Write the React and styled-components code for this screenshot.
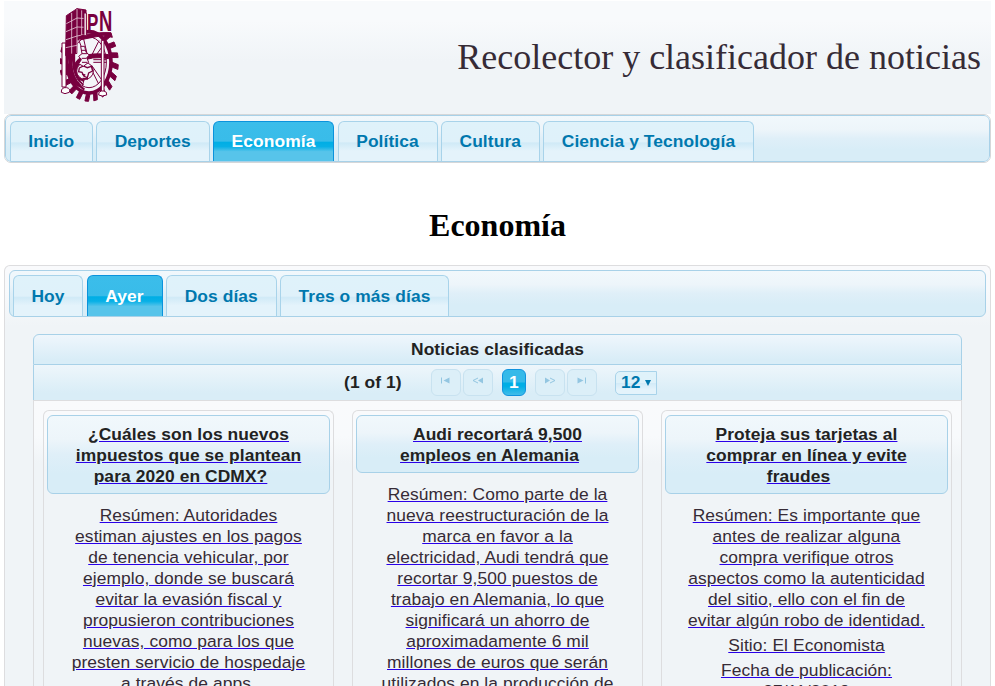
import React from "react";
import styled, { createGlobalStyle, css } from "styled-components";

const Global = createGlobalStyle`
  * { box-sizing: border-box; }
  html, body { margin: 0; height: 686px; overflow: hidden; background: #fff; }
  body {
    font-family: "Liberation Sans", Arial, sans-serif;
    font-size: 17.4px;
    letter-spacing: 0.09px;
    color: #362b36;
  }
`;

const frost = "linear-gradient(#f1f8fc 0, #edf5fa 30%, #dfeff8 50%, #d8edf7 75%, #d8edf7 100%)";

const Page = styled.div`
  width: 987px;
  height: 686px;
  margin-left: 4px;
  padding-top: 1px;
  overflow: hidden;
`;

const Header = styled.header`
  height: 113px;
  padding: 0 10px 0 56px;
  display: flex;
  justify-content: space-between;
  align-items: flex-start;
  background: linear-gradient(#f8fafc 0, #f8fafc 20px, #f0f4f7 60px);
`;

const SiteTitle = styled.div`
  margin-top: 36px;
  font-family: "Liberation Serif", "Times New Roman", serif;
  font-size: 36px;
  letter-spacing: 0;
  line-height: 41px;
  white-space: nowrap;
`;

const Crest = styled.svg`
  margin-top: 6px;
  width: 60px;
  height: 97px;
`;

const TabBar = styled.nav`
  display: flex;
  align-items: flex-end;
  gap: 3.5px;
  height: 47px;
  padding: 0 ${(p) => p.$inset}px;
  border: 1px solid #a8d1e8;
  border-radius: 6px;
  background: ${frost};
`;

const NavFrame = styled.div`
  height: 49px;
  border: 1px solid #d5d7d9;
  border-radius: 7px;
  overflow: hidden;
`;

const Tab = styled.a`
  width: ${(p) => p.$width}px;
  height: ${(p) => p.$height}px;
  padding-top: ${(p) => p.$height - 31}px;
  border: 1px solid #a8d3ea;
  border-bottom: 0;
  border-radius: 6px 6px 0 0;
  background: linear-gradient(#dff2fa 0, #dff1fa 50%, #d0eaf7 54%, #e4f3fb 74%, #e4f3fb 100%);
  color: #0078ae;
  font-weight: bold;
  line-height: 20px;
  text-align: center;
  white-space: nowrap;
  ${(p) =>
    p.$active &&
    css`
      border-color: #0b93dc;
      background: linear-gradient(#3bbdea 0, #39bce9 49%, #00aee5 52%, #08b0e6 63%, #57c4ea 76%, #57c4ea 100%);
      color: #fff;
    `}
`;

const PageTitle = styled.h1`
  margin: 45px 0 22px;
  font: bold 32px/35px "Liberation Serif", "Times New Roman", serif;
  letter-spacing: 0;
  color: #000;
  text-align: center;
`;

const Panel = styled.section`
  height: 440px;
  padding: 4px 4px 0;
  border: 1px solid #dddddf;
  border-bottom: 0;
  border-radius: 6px 6px 0 0;
  background: linear-gradient(#f9fafc 0, #f8fafc 25px, #f0f4f7 60px);
`;

const DataGrid = styled.div`
  margin: 17px 24px 0;
`;

const GridTitle = styled.div`
  height: 31px;
  border: 1px solid #a8d1e8;
  border-radius: 6px 6px 0 0;
  background: linear-gradient(#eff6fc, #d9edf7 85%);
  color: #222;
  font-weight: bold;
  line-height: 29px;
  text-align: center;
`;

const Pager = styled.div`
  display: flex;
  height: 35px;
  align-items: center;
  padding-left: 310px;
  border: solid #a8d1e8;
  border-width: 0 1px;
  background: linear-gradient(#eef6fb, #d9edf7 80%);
  color: #222;
  font-weight: bold;
`;

const PageCount = styled.span`
  width: 87px;
`;

const PageButton = styled.span`
  display: flex;
  width: ${(p) => (p.$active ? 24 : 30)}px;
  height: 27px;
  margin-right: ${(p) => p.$gap}px;
  justify-content: center;
  align-items: center;
  border: 1px solid ${(p) => (p.$active ? "#1093de" : "#c8e2f0")};
  border-radius: 6px;
  background: ${(p) => (p.$active ? "linear-gradient(#36bae9 0 48%, #00aee5 52% 65%, #42bdea)" : "#dceff8")};
  color: #fff;
  svg { display: block; margin-bottom: 4px; }
`;

const RowsSelect = styled.span`
  display: flex;
  align-items: center;
  gap: 4px;
  width: 42px;
  height: 24px;
  padding-left: 5px;
  border: 1px solid #a8d3ea;
  border-radius: 5px 0 0 5px;
  background: linear-gradient(#dff2fa 0 48%, #d3ebf8 52%, #e4f3fb 80%);
  color: #0078ae;
`;

const Cards = styled.div`
  display: grid;
  grid-template-columns: repeat(3, 291px);
  column-gap: 18px;
  height: 310px;
  padding: 9px 9px 0;
  border: 1px solid #dddddf;
  border-bottom: 0;
  background: linear-gradient(#f9fafc 0, #f8fafc 35px, #f0f4f7 62px);
`;

const Card = styled.article`
  padding: 4px 3px 0;
  border: 1px solid #dddddf;
  border-bottom: 0;
  border-radius: 6px 6px 0 0;
  background: linear-gradient(#f9fafc 0, #f8fafc 30px, #f0f4f7 58px);
  text-align: center;
  line-height: 21px;
`;

const Line = styled.div`
  white-space: nowrap;
  text-decoration: underline #2a00e8;
`;

const CardTitle = styled.h2`
  margin: 0 0 11px;
  padding: 8px 0 6px;
  border: 1px solid #a8d1e8;
  border-radius: 6px;
  background: ${frost};
  color: #222;
  font-size: inherit;
  ${Line}:last-child { padding-right: 16px; }
`;

const Field = styled.div`
  margin-top: 4px;
`;

const sections = [["Inicio", 82.5], ["Deportes", 113.5], ["Economía", 121], ["Política", 100], ["Cultura", 98.5], ["Ciencia y Tecnología", 211]];
const days = [["Hoy", 70], ["Ayer", 76], ["Dos días", 110.5], ["Tres o más días", 169]];

const news = [
  {
    title: ["¿Cuáles son los nuevos", "impuestos que se plantean", "para 2020 en CDMX?"],
    summary: ["Resúmen: Autoridades", "estiman ajustes en los pagos", "de tenencia vehicular, por", "ejemplo, donde se buscará", "evitar la evasión fiscal y", "propusieron contribuciones", "nuevas, como para los que", "presten servicio de hospedaje", "a través de apps."],
    fields: [],
  },
  {
    title: ["Audi recortará 9,500", "empleos en Alemania"],
    summary: ["Resúmen: Como parte de la", "nueva reestructuración de la", "marca en favor a la", "electricidad, Audi tendrá que", "recortar 9,500 puestos de", "trabajo en Alemania, lo que", "significará un ahorro de", "aproximadamente 6 mil", "millones de euros que serán", "utilizados en la producción de"],
    fields: [],
  },
  {
    title: ["Proteja sus tarjetas al", "comprar en línea y evite", "fraudes"],
    summary: ["Resúmen: Es importante que", "antes de realizar alguna", "compra verifique otros", "aspectos como la autenticidad", "del sitio, ello con el fin de", "evitar algún robo de identidad."],
    fields: [["Sitio: El Economista"], ["Fecha de publicación:", "27/11/2019"]],
  },
];

const Lines = ({ items }) => items.map((t) => <Line key={t}>{t}</Line>);

const tooth = (deg) => {
  const at = (d, rx, ry) => {
    const r = (d * Math.PI) / 180;
    return `${(117 + rx * Math.cos(r)).toFixed(1)} ${(186 + ry * Math.sin(r)).toFixed(1)}`;
  };
  return `M${at(deg - 5, 68, 92)}L${at(deg - 1, 88, 117)}L${at(deg + 6, 88, 117)}L${at(deg + 4, 68, 92)}z`;
};
const teeth = Array.from({ length: 15 }, (_, i) => tooth(-48 + i * 17.5));

const Logo = () => (
  <Crest viewBox="30 20 180 291" fill="none" stroke="#78003f" strokeWidth="3">
    <path d={teeth.join("")} fill="#78003f" />
    <ellipse cx="117" cy="186" rx="66" ry="92" fill="#f4f6f9" strokeWidth="11" />
    <ellipse cx="117" cy="186" rx="52" ry="76" strokeWidth="3" />
    <path d="M105 170L85 115M113 168L100 112M125 165l22-44M133 172l27-38M130 178h40M130 186h40M125 195l33 48M120 199l26 52M108 198L85 250M112 200l-15 58" />
    <path d="M60 150v60q4 36 30 48M72 150v50q6 30 30 42M68 160Q52 230 103 268" strokeWidth="7" />
    <path d="M70 203q8-38 58-42 30-2 48 2v12q-22-5-48-2-38 5-46 32-4 26 18 48-24-12-30-50z" fill="#78003f" />
    <circle cx="105" cy="212" r="25" fill="#f4f6f9" />
    <path d="M88 203l12-6 12 5 12-4 4 14-12 6-4 14-10-4-6-12-10-2zM98 234l16 2M96 222l10 2" strokeWidth="4" />
    <path d="M92 138h12l4 18 10 8-8 8 6 14-16 12-14-8 8-12-8-10 10-8z" fill="#f4f6f9" />
    <path d="M94 150h12M96 160h16M95 174h14M96 186h16" />
    <path d="M36 128h12v132H36zM154 120h8v154h-8z" fill="#fff" />
    <path d="M42 262h8q12 2 8 14-14 8-24 0-2-10 8-14zM154 272h8q10 2 8 12-14 6-24 0-2-10 8-12z" fill="#fff" />
    <path d="M49 46l32-21v134l-34 7z" fill="#78003f" />
    <path d="M81 25l27 4v80l-27 10z" fill="#78003f" />
    <path d="M49 70l32-17 27 2M48 94l33-14 27 1M48 118l33-11 27-5M47 142l34-7M65 38v122M81 26v132M95 30v82" stroke="#e5c7d6" strokeWidth="2.5" />
    <path d="M92 107q42-12 91-10l4 14q-22-7-42-3l-53 10z" fill="#78003f" />
    <path d="M102 38h7v68h-7z" fill="#fff" />
    <g fill="#78003f" stroke="none" fontFamily="Liberation Sans, Arial, sans-serif" fontWeight="bold" letterSpacing="0">
      <text x="111" y="94" fontSize="80" textLength="34" lengthAdjust="spacingAndGlyphs">P</text>
      <text x="147" y="93" fontSize="88" textLength="40" lengthAdjust="spacingAndGlyphs">N</text>
    </g>
  </Crest>
);

const glyphs = {
  first: { line: "M1.5 0.5v6", head: "M9.5 0.5v6L3.5 3.5z" },
  prev: { line: "M6 1L1 3.5 6 6", head: "M11 0.5v6L6 3.5z" },
  next: { line: "M6 1l5 2.5L6 6", head: "M1 0.5v6l5-3z" },
  last: { line: "M9.5 0.5v6", head: "M1.5 0.5v6l6-3z" },
};

const Arrow = ({ kind }) => (
  <svg width="12" height="7" viewBox="0 0 12 7">
    <path d={glyphs[kind].line} fill="none" stroke="#93c6e1" />
    <path d={glyphs[kind].head} fill="#93c6e1" />
  </svg>
);

export default function App() {
  return (
    <Page>
      <Global />
      <Header>
        <Logo />
        <SiteTitle>Recolector y clasificador de noticias</SiteTitle>
      </Header>
      <NavFrame>
        <TabBar $inset={4}>
          {sections.map(([name, width]) => (
            <Tab key={name} $width={width} $height={40} $active={name === "Economía"}>{name}</Tab>
          ))}
        </TabBar>
      </NavFrame>
      <PageTitle>Economía</PageTitle>
      <Panel>
        <TabBar $inset={3}>
          {days.map(([name, width]) => (
            <Tab key={name} $width={width} $height={41} $active={name === "Ayer"}>{name}</Tab>
          ))}
        </TabBar>
        <DataGrid>
          <GridTitle>Noticias clasificadas</GridTitle>
          <Pager>
            <PageCount>(1 of 1)</PageCount>
            <PageButton $gap={2}><Arrow kind="first" /></PageButton>
            <PageButton $gap={9}><Arrow kind="prev" /></PageButton>
            <PageButton $active $gap={9}>1</PageButton>
            <PageButton $gap={2}><Arrow kind="next" /></PageButton>
            <PageButton $gap={18}><Arrow kind="last" /></PageButton>
            <RowsSelect>
              12
              <svg width="6" height="6" viewBox="0 0 6 6"><path d="M0 0h6L3 6z" fill="#0078ae" /></svg>
            </RowsSelect>
          </Pager>
          <Cards>
            {news.map((item) => (
              <Card key={item.title[0]}>
                <CardTitle><Lines items={item.title} /></CardTitle>
                <Lines items={item.summary} />
                {item.fields.map((lines) => (
                  <Field key={lines[0]}><Lines items={lines} /></Field>
                ))}
              </Card>
            ))}
          </Cards>
        </DataGrid>
      </Panel>
    </Page>
  );
}
